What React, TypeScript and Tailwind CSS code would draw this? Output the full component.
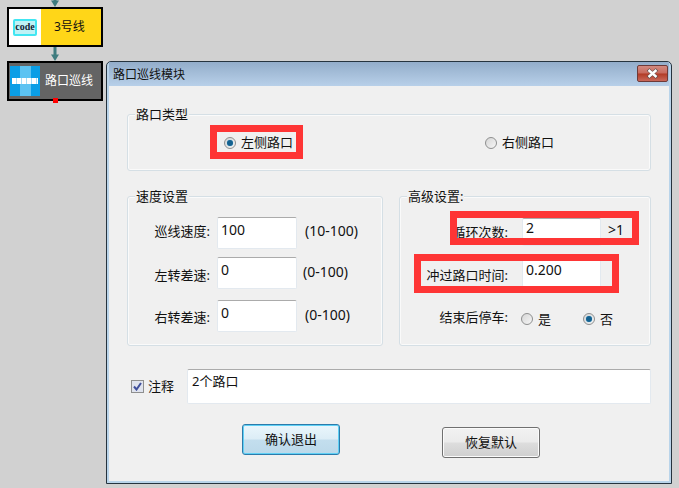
const fontStack = "font-['Noto_Sans','Noto_Sans_CJK_SC',sans-serif]";

function Connector({ className }: { className: string }) {
  return (
    <svg className={className} width="10" height="14" viewBox="0 0 10 14">
      <rect x="3.5" y="0" width="3" height="10" fill="#3f7c7f" />
      <path d="M1 7.5h8L5 14z" fill="#3f7c7f" />
    </svg>
  );
}

function Radio({ checked }: { checked?: boolean }) {
  return (
    <span className="flex size-[12px] shrink-0 items-center justify-center rounded-full border border-[#8e8f8f] bg-gradient-to-br from-[#d6d6d6] to-[#f6f6f6]">
      {checked && <span className="size-[6px] rounded-full bg-[#14618f] shadow-[0_0_1px_#6cc0ee]" />}
    </span>
  );
}

function Group({ title, className, children }: { title: string; className: string; children: React.ReactNode }) {
  return (
    <div className={`relative rounded-[3px] border border-[#d5dfe5] shadow-[inset_0_0_0_1px_#fafafa] ${className}`}>
      <span className="absolute left-[7px] top-[-10px] bg-[#f0f0f0] px-px text-[13px] leading-[18px]">{title}</span>
      {children}
    </div>
  );
}

function Field({ value, className = "" }: { value: string; className?: string }) {
  return (
    <div className={`h-[32px] shrink-0 rounded-[2px] border border-[#e3e9ef] border-t-[#ababab] bg-white pl-[3px] text-[14px] ${className}`}>
      {value}
    </div>
  );
}

function SpeedRow({ label, value, range, className, labelClass, rangeClass }: { label: string; value: string; range: string; className: string; labelClass: string; rangeClass: string }) {
  return (
    <div className={`flex ${className}`}>
      <span className={`w-[82px] text-right text-[13px] leading-[18px] ${labelClass}`}>{label}</span>
      <Field value={value} className="ml-[7px] w-[80px] leading-[24px]" />
      <span className={`text-[14px] leading-[18px] ${rangeClass}`}>{range}</span>
    </div>
  );
}

function RedBox({ className }: { className: string }) {
  return <div className={`pointer-events-none absolute border-[7px] border-[#fe3535] ${className}`} />;
}

export default function App() {
  return (
    <div className={`relative h-[488px] w-[679px] overflow-hidden bg-[#d1d1d1] text-[#111] ${fontStack}`}>
      <Connector className="absolute left-[50px] top-[-7px]" />
      <div className="absolute left-[7px] top-[7px] flex h-[40px] w-[96px] border-[2px] border-black bg-[#ffd618]">
        <div className="flex w-[32px] items-center justify-center bg-white">
          <span className="flex h-[17px] w-[24px] items-center justify-center rounded-[2px] border-[2px] border-[#41e6f2] bg-[#bff2f6] font-['Liberation_Serif',serif] text-[10px] font-bold leading-none text-[#123]">
            code
          </span>
        </div>
        <span className="flex-1 pl-[13px] text-[12px] leading-[36px]">3号线</span>
      </div>
      <Connector className="absolute left-[50px] top-[47px]" />

      <div className="absolute left-[7px] top-[61px] flex h-[40px] w-[96px] items-center border-[2px] border-black bg-[#646464]">
        <div className="relative ml-[1px] size-[30px] bg-[#0a9ee6]">
          <div className="absolute inset-y-0 left-[10px] w-[11px] bg-[#5cc3f2]" />
          <div className="absolute inset-x-[2px] top-[12px] h-[6px] bg-[repeating-linear-gradient(90deg,#fff_0_4px,#a5dcf5_4px_5px)]" />
        </div>
        <span className="ml-[5px] text-[12px] leading-none text-white">路口巡线</span>
      </div>
      <div className="absolute left-[53px] top-[98px] size-[5px] bg-[#fe0000]" />

      {/* dialog window */}
      <div className="absolute left-[106px] top-[61px] flex h-[423px] w-[566px] flex-col rounded-t-[5px] border border-[#26343f] bg-[#b9d4ea] px-[2px] pb-[2px]">
        <div className="flex h-[24px] shrink-0 items-center justify-between bg-gradient-to-b from-[#93adca] to-[#b8d0e9] pl-[4px] pr-[1px]">
          <span className="pt-[2px] text-[12px] leading-none">路口巡线模块</span>
          <button type="button" className="mb-[2px] flex h-[17px] w-[31px] items-center justify-center rounded-[2px] border border-[#6e3a38] bg-[linear-gradient(#d28a80_0,#c8695d_48%,#b13a25_52%,#c9685a_100%)]">
            <svg width="13" height="11" viewBox="0 0 13 11">
              <path d="M2 1.5l9 8M11 1.5l-9 8" stroke="#5a4a4a" strokeWidth="3.6" />
              <path d="M2.5 2l8 7M10.5 2l-8 7" stroke="#fff" strokeWidth="2.4" />
            </svg>
          </button>
        </div>

        <div className="flex-1 bg-[#f0f0f0] pl-[18px] pt-[28px]">
          <Group title="路口类型" className="flex h-[57px] w-[524px] items-center pl-[96px]">
            <div className="relative flex w-[261px] items-center gap-[5px] text-[13px]">
              <Radio checked />
              <span>左侧路口</span>
              <RedBox className="left-[-14px] top-[-8px] h-[34px] w-[93px]" />
            </div>
            <div className="flex items-center gap-[5px] text-[13px]">
              <Radio />
              <span>右侧路口</span>
            </div>
          </Group>

          <div className="mt-[25px] flex gap-[16px]">
            <Group title="速度设置" className="h-[150px] w-[256px] pt-[20px]">
              <SpeedRow label="巡线速度:" value="100" range="(10-100)" className="" labelClass="pt-[5px]" rangeClass="ml-[8px] pt-[5px]" />
              <SpeedRow label="左转差速:" value="0" range="(0-100)" className="mt-[8px]" labelClass="pt-[9px]" rangeClass="ml-[6px] pt-[6px]" />
              <SpeedRow label="右转差速:" value="0" range="(0-100)" className="mt-[11px]" labelClass="pt-[8px]" rangeClass="ml-[8px] pt-[6px]" />
            </Group>

            <Group title="高级设置:" className="h-[150px] w-[252px] pt-[21px]">
              <div className="flex">
                <span className="w-[108px] pt-[5px] text-right text-[13px] leading-[18px]">循环次数:</span>
                <Field value="2" className="ml-[14px] !h-[28px] w-[79px] leading-[17px]" />
                <span className="ml-[7px] pt-[3px] text-[14px] leading-[18px]">&gt;1</span>
              </div>
              <div className="mt-[9px] flex">
                <span className="w-[108px] pt-[11px] text-right text-[13px] leading-[18px]">冲过路口时间:</span>
                <Field value="0.200" className="ml-[14px] w-[79px] leading-[28px]" />
              </div>
              <div className="mt-[21px] flex items-start text-[13px] leading-[18px]">
                <span className="w-[108px] text-right">结束后停车:</span>
                <span className="ml-[13px] mt-[5px]"><Radio /></span>
                <span className="ml-[5px] mt-[2px] w-[45px]">是</span>
                <span className="mt-[5px]"><Radio checked /></span>
                <span className="ml-[5px] mt-[2px]">否</span>
              </div>
              <RedBox className="left-[50px] top-[14px] h-[34px] w-[189px]" />
              <RedBox className="left-[14px] top-[57px] h-[39px] w-[205px]" />
            </Group>
          </div>

          <div className="mt-[23px] flex h-[35px] w-[524px]">
            <div className="ml-[4px] mt-[11px] flex h-[13px] w-[13px] items-center justify-center border border-[#8e8f8f] bg-[#dfe3ee]">
              <svg width="9" height="9" viewBox="0 0 9 9">
                <path d="M1 4.5l2.5 3L8 1" fill="none" stroke="#3f4f9c" strokeWidth="2" />
              </svg>
            </div>
            <span className="ml-[4px] pt-[8px] text-[13px] leading-[18px]">注释</span>
            <div className="ml-[13px] flex-1 rounded-[2px] border border-[#e3e9ef] border-t-[#ababab] bg-white pl-[4px] text-[13px] leading-[22px]">
              2个路口
            </div>
          </div>

          <div className="mt-[20px] flex items-start">
            <button type="button" className="ml-[115px] h-[31px] w-[98px] rounded-[3px] border border-[#2c7bab] bg-[linear-gradient(#eaf6fc_0,#dcedf6_48%,#c3deee_52%,#bcd9ea_100%)] text-[13px] shadow-[inset_0_0_0_1px_#5fd0f5]">
              确认退出
            </button>
            <button type="button" className="ml-[102px] mt-[3px] h-[31px] w-[98px] rounded-[3px] border border-[#707070] bg-[linear-gradient(#f2f2f2_0,#ebebeb_48%,#dddddd_52%,#cfcfcf_100%)] text-[13px] shadow-[inset_0_0_0_1px_#fbfbfb]">
              恢复默认
            </button>
          </div>
        </div>
      </div>
    </div>
  );
}
